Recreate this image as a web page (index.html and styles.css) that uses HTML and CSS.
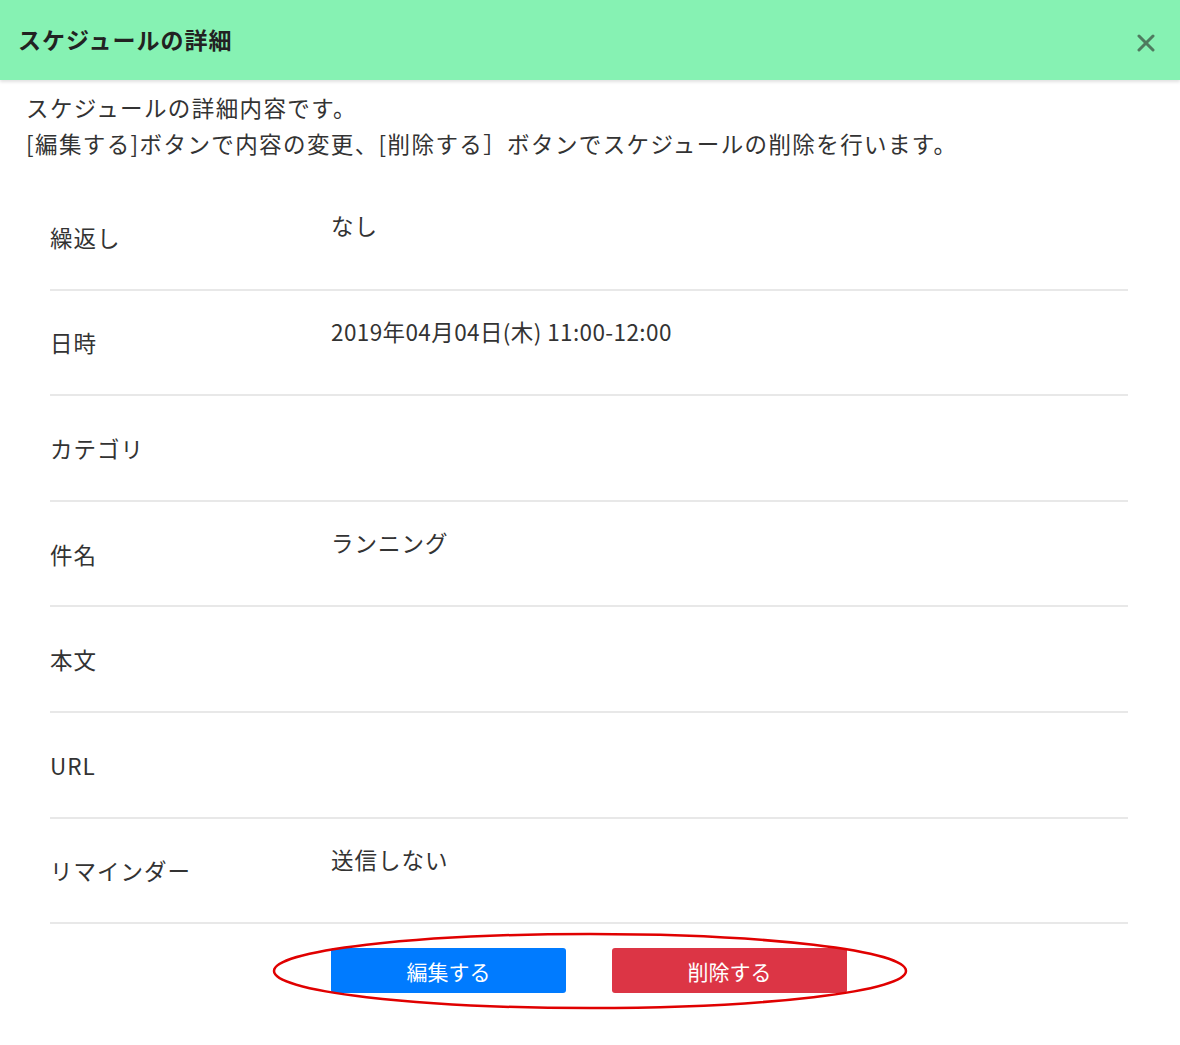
FILE: index.html
```html
<!DOCTYPE html>
<html lang="ja">
<head>
  <meta charset="UTF-8">
  <meta name="viewport" content="width=device-width, initial-scale=1.0">
  <title>スケジュールの詳細</title>
  <link rel="stylesheet" href="styles.css">
</head>
<body>

  <!-- Header -->
  <div class="modal-header">
    <h1>スケジュールの詳細</h1>
    <span class="close-btn" title="閉じる">
      <svg width="18" height="18" viewBox="0 0 18 18">
        <line x1="2" y1="2" x2="16" y2="16" stroke="#4f7b5f" stroke-width="3" stroke-linecap="round"/>
        <line x1="16" y1="2" x2="2" y2="16" stroke="#4f7b5f" stroke-width="3" stroke-linecap="round"/>
      </svg>
    </span>
  </div>

  <!-- Beschreibung -->
  <p class="intro">
    スケジュールの詳細内容です。<br>
    [編集する]ボタンで内容の変更、[削除する］ボタンでスケジュールの削除を行います。
  </p>

  <!-- Detail rows -->
  <div class="detail-list">
    <div class="detail-row">
      <div class="detail-label">繰返し</div>
      <div class="detail-value">なし</div>
    </div>
    <div class="detail-row">
      <div class="detail-label">日時</div>
      <div class="detail-value numeric">2019年04月04日(木) 11:00-12:00</div>
    </div>
    <div class="detail-row">
      <div class="detail-label">カテゴリ</div>
      <div class="detail-value"></div>
    </div>
    <div class="detail-row">
      <div class="detail-label">件名</div>
      <div class="detail-value">ランニング</div>
    </div>
    <div class="detail-row">
      <div class="detail-label">本文</div>
      <div class="detail-value"></div>
    </div>
    <div class="detail-row">
      <div class="detail-label">URL</div>
      <div class="detail-value"></div>
    </div>
    <div class="detail-row">
      <div class="detail-label">リマインダー</div>
      <div class="detail-value">送信しない</div>
    </div>
  </div>

  <!-- Buttons -->
  <div class="actions">
    <button class="btn btn-edit">編集する</button>
    <button class="btn btn-delete">削除する</button>
    <svg class="highlight" viewBox="0 0 640 80" preserveAspectRatio="none">
      <ellipse cx="320" cy="40" rx="316" ry="37" fill="none" stroke="#e00000" stroke-width="2.5"/>
    </svg>
  </div>

</body>
</html>
```

FILE: styles.css
```css
body {
  font-family: "Noto Sans CJK JP", "Noto Sans", sans-serif;
  margin: 0;
  padding: 0 0 30px;
  background-color: #fff;
  color: #333;
}

/* Header */
.modal-header {
  display: flex;
  align-items: center;
  justify-content: space-between;
  height: 80px;
  padding: 0 25px 0 18px;
  background-color: #86f2b3;
  box-shadow: 0 2px 3px rgba(0, 0, 0, 0.12);
  box-sizing: border-box;
}

.modal-header h1 {
  margin: -3px 0 0;
  font-size: 23px;
  font-weight: bold;
  color: #222;
  letter-spacing: 1px;
}

.close-btn {
  display: flex;
  margin-top: 6px;
  cursor: pointer;
}

/* Intro */
.intro {
  margin: 0;
  padding: 9px 0 0 26px;
  font-size: 22.5px;
  line-height: 36px;
  letter-spacing: 1.4px;
}

/* Rows */
.detail-list {
  margin: 24px 52px 0 50px;
}

.detail-row {
  display: flex;
  align-items: center;
  height: 105.6px;
  box-sizing: border-box;
  border-bottom: 2px solid #e8e8e8;
  font-size: 22.5px;
  line-height: 34px;
  letter-spacing: 1px;
}

.detail-label {
  width: 281px;
  flex-shrink: 0;
}

.detail-value {
  align-self: flex-start;
  margin-top: 23px;
}

.detail-value.numeric {
  letter-spacing: 0.4px;
}

/* Buttons */
.actions {
  position: relative;
  display: flex;
  justify-content: center;
  gap: 46px;
  margin-top: 10px;
  padding: 14px 2px 15px 0;
}

.btn {
  width: 235px;
  height: 45px;
  border: none;
  border-radius: 3px;
  color: #fff;
  font-family: "Noto Sans CJK JP", "Noto Sans", sans-serif;
  font-size: 21px;
  cursor: pointer;
}

.btn-edit {
  background-color: #007bff;
}

.btn-delete {
  background-color: #dc3545;
}

.highlight {
  position: absolute;
  left: 50%;
  top: -3px;
  width: 640px;
  height: 80px;
  margin-left: -320px;
  pointer-events: none;
}
```
